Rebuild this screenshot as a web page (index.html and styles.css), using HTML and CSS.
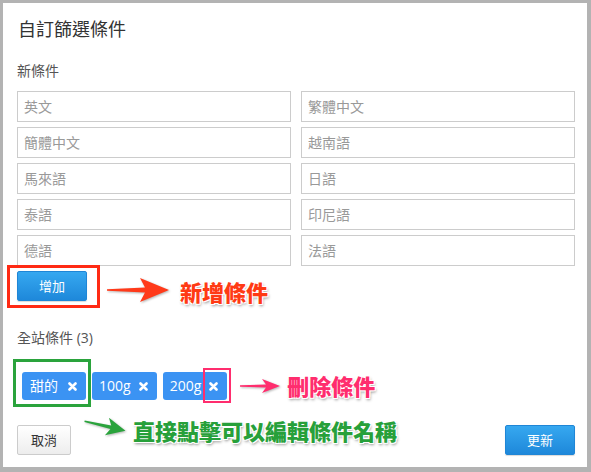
FILE: index.html
```html
<!DOCTYPE html>
<html lang="zh-Hant">
<head>
<meta charset="utf-8">
<title>自訂篩選條件</title>
<link rel="stylesheet" href="styles.css">
</head>
<body>
<div class="panel">
  <h1 class="title">自訂篩選條件</h1>
  <div class="label">新條件</div>
  <div class="grid">
    <input class="field" placeholder="英文">
    <input class="field" placeholder="繁體中文">
    <input class="field" placeholder="簡體中文">
    <input class="field" placeholder="越南語">
    <input class="field" placeholder="馬來語">
    <input class="field" placeholder="日語">
    <input class="field" placeholder="泰語">
    <input class="field" placeholder="印尼語">
    <input class="field" placeholder="德語">
    <input class="field" placeholder="法語">
  </div>

  <div class="add-row">
    <span class="mark mark-red"><button class="btn btn-primary">增加</button></span>
    <svg class="arrow arrow-red" width="62" height="26" viewBox="0 0 62 26"><path d="M0,12.2 L38,10.6 L33,1 L62,13 L33,25 L38,15.4 L0,13.8 Z" fill="#ff3a1a"/></svg>
    <span class="note note-red">新增條件</span>
  </div>

  <div class="label label-site">全站條件 (3)</div>

  <div class="tags-row">
    <span class="tag mark mark-green">甜的<span class="tag-x"><svg width="9" height="9" viewBox="0 0 9 9"><path d="M1.5,1.5 L7.5,7.5 M7.5,1.5 L1.5,7.5" stroke="#fff" stroke-width="2.6" stroke-linecap="round"/></svg></span></span>
    <span class="tag tag-latin">100g<span class="tag-x"><svg width="9" height="9" viewBox="0 0 9 9"><path d="M1.5,1.5 L7.5,7.5 M7.5,1.5 L1.5,7.5" stroke="#fff" stroke-width="2.6" stroke-linecap="round"/></svg></span></span>
    <span class="tag tag-latin">200g<span class="tag-x mark mark-pink"><svg width="9" height="9" viewBox="0 0 9 9"><path d="M1.5,1.5 L7.5,7.5 M7.5,1.5 L1.5,7.5" stroke="#fff" stroke-width="2.6" stroke-linecap="round"/></svg></span></span>
    <svg class="arrow arrow-pink" width="40" height="16" viewBox="0 0 40 16"><path d="M0,7.3 L26,6.6 L22,1 L40,8 L22,15 L26,9.4 L0,8.7 Z" fill="#ff2d6e"/></svg>
    <span class="note note-pink">刪除條件</span>
  </div>

  <div class="footer">
    <button class="btn btn-default">取消</button>
    <div class="hint">
      <svg class="arrow arrow-green" width="44" height="22" viewBox="0 0 44 22"><path d="M1,10.2 L28,9.2 L24,2 L43,11 L24,20 L28,12.8 L1,11.8 Z" fill="#2aa33c" transform="rotate(13 22 11)"/></svg>
      <span class="note note-green">直接點擊可以編輯條件名稱</span>
    </div>
    <button class="btn btn-primary btn-right">更新</button>
  </div>
</div>
</body>
</html>
```

FILE: styles.css
```css
html, body {
  margin: 0;
  padding: 0;
}

body {
  background: #b3b3b3;
  font-family: "Open Sans", "Noto Sans CJK TC", sans-serif;
  color: #333;
}

.panel {
  margin: 3px 4px 5px 3px;
  height: 464px;
  box-sizing: border-box;
  background: #fff;
  padding: 14px 12px 0 14px;
}

.title {
  margin: 0;
  font-size: 18px;
  line-height: 24px;
  font-weight: normal;
  color: #333;
  padding-left: 1px;
}

.label {
  margin-top: 20px;
  font-size: 14px;
  line-height: 20px;
  color: #555;
}

.grid {
  margin-top: 10px;
  display: grid;
  grid-template-columns: 1fr 1fr;
  column-gap: 10px;
  row-gap: 5px;
}

.field {
  box-sizing: border-box;
  height: 31px;
  width: 100%;
  margin: 0;
  border: 1px solid #ccc;
  border-radius: 0;
  padding: 0 6px;
  font-family: "Open Sans", "Noto Sans CJK TC", sans-serif;
  font-size: 14px;
  color: #333;
  background: #fff;
  outline: none;
}

.field::placeholder {
  color: #999;
}

.btn {
  box-sizing: border-box;
  height: 30px;
  margin: 0;
  padding: 0;
  border-radius: 2px;
  font-family: "Open Sans", "Noto Sans CJK TC", sans-serif;
  font-size: 13px;
  line-height: 28px;
  cursor: pointer;
}

.btn-primary {
  width: 70px;
  color: #fff;
  border: 1px solid #1f86d6;
  background: linear-gradient(#36a8f0, #1e88da);
  box-shadow: 0 1px 1px rgba(0, 0, 0, 0.15);
}

.btn-default {
  width: 54px;
  color: #333;
  border: 1px solid #ccc;
  background: linear-gradient(#fff, #ededed);
}

.btn-right {
  margin-left: auto;
}

/* annotation frames */
.mark {
  position: relative;
}

.mark::after {
  content: "";
  position: absolute;
  pointer-events: none;
}

.mark-red::after {
  top: -6px;
  left: -10px;
  right: -13px;
  bottom: -7px;
  border: 3px solid #ff2a14;
}

.mark-green::after {
  top: -13px;
  left: -9px;
  right: -5px;
  bottom: -7px;
  border: 3px solid #2aa33c;
}

.mark-pink::after {
  top: -4px;
  left: 2px;
  right: -4px;
  bottom: -3px;
  border: 2.5px solid #ff2d6e;
}

.add-row {
  margin-top: 5px;
  height: 30px;
  display: flex;
  align-items: center;
}

.mark-red {
  display: flex;
}

.arrow {
  flex: none;
  overflow: visible;
  filter: drop-shadow(1px 1px 1px rgba(0, 0, 0, 0.3));
}

.arrow-red {
  margin-left: 20px;
  margin-top: 8px;
}

.note {
  font-family: "Noto Sans CJK TC", sans-serif;
  font-weight: 900;
  font-size: 22px;
  line-height: 22px;
  white-space: nowrap;
  text-shadow:
    -1px -1px 0 #fff, 1px -1px 0 #fff, -1px 1px 0 #fff, 1px 1px 0 #fff,
    0 0 2px #fff, 1px 2px 3px rgba(0, 0, 0, 0.45);
}

.note-red {
  color: #ff3a14;
  margin-left: 11px;
  margin-top: 10px;
}

.label-site {
  margin-top: 27px;
}

.tags-row {
  margin-top: 24px;
  height: 28px;
  display: flex;
  align-items: center;
  padding-left: 5px;
}

.tag {
  display: flex;
  align-items: center;
  height: 28px;
  box-sizing: border-box;
  padding-left: 8px;
  margin-right: 6px;
  background: #3b93f3;
  border-radius: 3px;
  color: #fff;
  font-size: 14px;
  line-height: 28px;
}

.tag-x {
  display: flex;
  align-items: center;
  height: 28px;
  padding: 0 9px 0 10px;
}

.tag-latin {
  padding-left: 7px;
}

.tag-latin .tag-x {
  padding-left: 8px;
}

.arrow-pink {
  margin-left: 7px;
}

.note-pink {
  color: #ff2d6e;
  margin-left: 7px;
  margin-top: -2px;
}

.footer {
  margin-top: 25px;
  display: flex;
  align-items: center;
  height: 30px;
}

.hint {
  align-self: flex-start;
  display: flex;
  align-items: flex-start;
  margin-top: -6px;
  margin-left: 12px;
}

.arrow-green {
  margin-top: -4px;
  margin-right: 6px;
}

.note-green {
  color: #27a03a;
}
```
